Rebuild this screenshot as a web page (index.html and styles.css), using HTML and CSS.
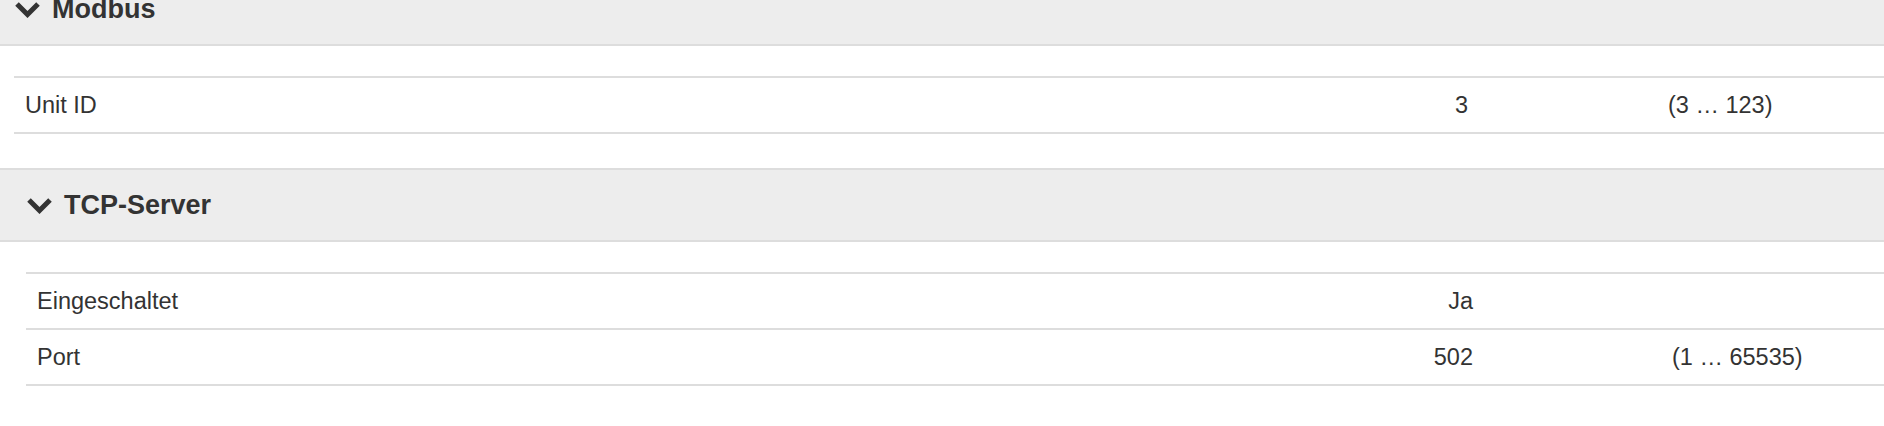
FILE: index.html
```html
<html>
<head>
    <title>Modbus</title>
    <link rel="stylesheet" href="styles.css">
</head>
<body>

<div class="page">

    <div class="section section_top">
        <div class="section_header">
            <svg class="chevron" viewBox="0 0 27 17"><polyline points="3,3 13.5,13.5 24,3"/></svg>
            <span>Modbus</span>
        </div>
        <div class="section_body">
            <div class="row">
                <div class="label">Unit ID</div>
                <div class="value">3</div>
                <div class="range">(3 &hellip; 123)</div>
            </div>
        </div>
    </div>

    <div class="section section_nested">
        <div class="section_header">
            <svg class="chevron" viewBox="0 0 27 17"><polyline points="3,3 13.5,13.5 24,3"/></svg>
            <span>TCP-Server</span>
        </div>
        <div class="section_body">
            <div class="row">
                <div class="label">Eingeschaltet</div>
                <div class="value">Ja</div>
                <div class="range"></div>
            </div>
            <div class="row">
                <div class="label">Port</div>
                <div class="value">502</div>
                <div class="range">(1 &hellip; 65535)</div>
            </div>
        </div>
    </div>

</div>

</body>
</html>
```

FILE: styles.css
```css
body {
    margin: 0px;
    background: #ffffff;
    color: #333333;
    font-family: "Liberation Sans", Arial, sans-serif;
    overflow: hidden;
}

/* the page is scrolled a little, the first header is cut at the top */
.page {
    margin-top: -28px;
}

.section_header {
    display: flex;
    align-items: center;
    gap: 11px;
    height: 70px;
    background: #ededed;
    border-top: 2px solid #dddddd;
    border-bottom: 2px solid #dddddd;
    font-size: 27px;
    font-weight: bold;
}

.chevron {
    width: 27px;
    height: 17px;
    fill: none;
    stroke: #333333;
    stroke-width: 5px;
}

.section_body {
    padding-top: 30px;
    padding-bottom: 34px;
}

.section_top .section_header {
    padding-left: 14px;
}

.section_top .section_body {
    margin-left: 14px;
    --label-width: 1254px;
    --range-gap: 200px;
}

.section_nested .section_header {
    padding-left: 26px;
}

.section_nested .section_body {
    margin-left: 26px;
    --label-width: 1247px;
    --range-gap: 199px;
}

.row {
    display: grid;
    grid-template-columns: var(--label-width) 200px 1fr;
    align-items: center;
    height: 54px;
    border-top: 2px solid #dddddd;
    font-size: 23.5px;
}

.row:last-child {
    border-bottom: 2px solid #dddddd;
}

.label {
    padding-left: 11px;
}

.value {
    grid-column: 2;
    text-align: right;
}

.range {
    padding-left: var(--range-gap);
}
```
